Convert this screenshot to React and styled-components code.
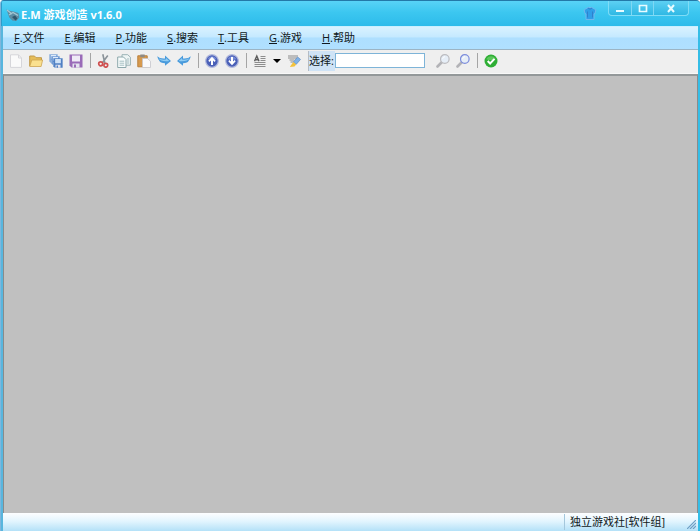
import React, { useState } from "react"
import styled, { createGlobalStyle } from "styled-components"

const GlobalStyle = createGlobalStyle`
    * {
        box-sizing: border-box;
    }

    body{
        margin: 0;
        font-family: "Open Sans", "Noto Sans CJK SC", sans-serif;
        font-size: 11px;
        color: #101820;
    }

    button{
        padding: 0;
        border: 0;
        background: none;
        font: inherit;
        color: inherit;
    }
`

const Window = styled.div`
    display: flex;
    flex-direction: column;
    min-height: 100vh;
    border-top: 1px solid #2379a8;
    border-left: 1px solid #7fb6dc;
    border-radius: 4px 4px 0 0;
    background: #35bde6;
    overflow: hidden;
`

const TitleBar = styled.header`
    display: flex;
    align-items: flex-start;
    height: 25px;
    padding: 0 11px 0 4px;
    background: linear-gradient(#58d3f7, #3cc7f0 45%, #2dbbea);
    border-left: 1px solid #2e9cc9;
`

const Title = styled.h1`
    display: flex;
    align-items: center;
    gap: 1px;
    flex: 1;
    height: 25px;
    margin: 0;
    padding-top: 2px;
    color: #fff;
    font-size: 11px;
    font-weight: 700;
    line-height: 16px;
    white-space: nowrap;
`

const SkinButton = styled.button`
    width: 14px;
    height: 16px;
    margin: 5px 11px 0 0;
`

const WindowButtons = styled.div`
    display: flex;
    height: 15px;
    border: 1px solid #7fdcf6;
    border-top: 0;
    border-radius: 0 0 4px 4px;
    background: linear-gradient(#5dd0f3, #2fb8e4);
`

const WindowButton = styled.button`
    display: flex;
    align-items: center;
    justify-content: center;
    width: ${({ $wide }) => ($wide ? "35px" : "22px")};

    & + & {
        border-left: 1px solid #7fd8f4;
    }
`

const Body = styled.div`
    display: flex;
    flex-direction: column;
    flex: 1;
    border-left: 2px solid #58b6de;
    border-right: 2px solid #35bde6;
`

const MenuBar = styled.nav`
    display: flex;
    align-items: center;
    gap: 20px;
    height: 24px;
    padding-left: 11px;
    border-top: 1px solid #c9efff;
    border-bottom: 1px solid #9cb4c4;
    background: linear-gradient(#d9f2ff, #c5e9ff 45%, #aedfff 50%, #b0e0ff);
`

const MenuItem = styled.button`
    line-height: 16px;
    white-space: nowrap;
`

const ToolBar = styled.div`
    display: flex;
    align-items: center;
    height: 24px;
    padding: 0 0 2px 3px;
    background: #efefef;
    border-bottom: 1px solid #f8f8f8;
`

const ToolButton = styled.button`
    display: flex;
    align-items: center;
    justify-content: center;
    width: ${({ $narrow }) => ($narrow ? "14px" : "20px")};
    height: 20px;
`

const Separator = styled.span`
    width: 1px;
    height: 15px;
    margin: 0 3px 0 4px;
    background: #a5a5a5;
`

const SelectLabel = styled.label`
    height: 20px;
    width: 27px;
    margin-left: 4px;
    border-left: 1px solid #b4bcc6;
    background: #cfe3f6;
    line-height: 20px;
    white-space: nowrap;
`

const SelectInput = styled.input`
    width: 90px;
    height: 15px;
    margin-right: 8px;
    padding: 0 2px;
    border: 1px solid #7eb4d8;
    background: #fff;
    font: inherit;
    outline: none;
`

const Workspace = styled.main`
    flex: 1;
    border: 1px solid #8b8b8b;
    border-top: 2px solid #939899;
    border-bottom: 0;
    background: #c0c0c0;
`

const StatusBar = styled.footer`
    display: flex;
    align-items: center;
    justify-content: flex-end;
    height: 18px;
    background: linear-gradient(#fdfeff, #e3f5fe 45%, #b4e1f8);
`

const StatusText = styled.span`
    width: 123px;
    padding-left: 5px;
    border-left: 1px solid #a4c7dc;
    line-height: 16px;
    white-space: nowrap;
`

const Grip = styled.svg`
    align-self: flex-end;
    margin: 0 2px 2px 0;
`

const menus = [
    ["F", "文件"],
    ["E", "编辑"],
    ["P", "功能"],
    ["S", "搜索"],
    ["T", "工具"],
    ["G", "游戏"],
    ["H", "帮助"],
];

const Disk = ({ color, light, x = 0, y = 0, size = 14 }) => (
    <svg x={x} y={y} width={size} height={size} viewBox="0 0 14 14">
        <path d="M.5.5h13v13H2.5l-2-2z" fill={color} />
        <path d="M3 1.5h8v6H3z" fill={light} />
        <path d="M3.5 9.5h7v4h-7z" fill="#e4e4ee" />
        <path d="M5 10.5h2v3H5z" fill={color} />
    </svg>
);

const Magnifier = ({ rim }) => (
    <>
        <path d="M6 8 1.5 12.5" stroke="#b3b3b7" strokeWidth="2.6" strokeLinecap="round" />
        <circle cx="8.8" cy="5" r="4.3" fill="#e6eef7" stroke={rim} strokeWidth="1.2" />
        <path d="M6.6 4.8q.5-1.9 2.4-2.1" fill="none" stroke="#fff" />
    </>
);

const CircleArrow = ({ flip }) => (
    <>
        <circle cx="7" cy="7" r="6.3" fill="#4a60b8" stroke="#b4bbdd" strokeWidth="1.2" />
        <path d="M2.5 5a5 5 0 0 1 9 0q-4 2-9 0" fill="#7488d4" />
        <path d="M7 2.8 3.3 6.7l1.2 1.2L6 6.6V11h2V6.6l1.5 1.3 1.2-1.2z" fill="#fff" transform={flip ? "rotate(180 7 7)" : undefined} />
    </>
);

const CurveArrow = () => (
    <>
        <path d="M.2 2.2Q3 5 8 4.4V1.6L14 7 8 11.8V9.2Q1.8 9.5.2 2.2z" fill="#4a9bdc" />
        <path d="M1.2 4Q4 6.3 9 5.6V4l3.3 3Q4 8 1.2 4z" fill="#8fccf3" />
    </>
);

const icons = {
    new: (
        <>
            <path d="M1.5.8h8l3 3.2v9.4h-11z" fill="#fafafa" stroke="#d6d6da" />
            <path d="M9.5.8V4h3" fill="none" stroke="#d6d6da" />
        </>
    ),
    open: (
        <>
            <path d="M.7 12V2h4.8L7 3.7h5.5V7" fill="#e6bd58" stroke="#c09a4c" />
            <path d="M.7 12.5 2.8 6h10.8l-1.5 6.5z" fill="#fae08e" stroke="#cda552" strokeWidth=".8" />
        </>
    ),
    saveAll: (
        <>
            <Disk color="#83aadb" light="#dfebfa" size={9} />
            <Disk color="#6f9ad4" light="#dfebfa" x={2} y={2} size={9} />
            <Disk color="#4f80c4" light="#cfe2f7" x={4} y={4} size={10} />
        </>
    ),
    save: <Disk color="#9a6bb8" light="#efeaf6" />,
    cut: (
        <>
            <path d="M5.8.3 7.8 9M10.8 1.5 5.2 9" stroke="#8a9298" strokeWidth="1.6" />
            <circle cx="3.7" cy="9.8" r="2" fill="none" stroke="#cf4f4f" strokeWidth="1.7" />
            <circle cx="8.8" cy="11.3" r="1.9" fill="none" stroke="#cf4f4f" strokeWidth="1.7" />
        </>
    ),
    copy: (
        <>
            <path d="M5 .7h5.7l2.7 2.5v8H5z" fill="#eef5f5" stroke="#9bb2b5" />
            <path d="M.7 3h5.8L9 5.5v8H.7z" fill="#f8fcfc" stroke="#8da8ac" />
            <path d="M2.5 7.2h4.7M2.5 9.2h4.7M2.5 11.2h4.7M10 5h2M10 7h2M10 9h2" stroke="#9bb7ba" strokeWidth=".9" />
        </>
    ),
    paste: (
        <>
            <path d="M.8 1.8h9.4v11H.8z" fill="#d79a4e" stroke="#b97f3c" />
            <path d="M3.3.5h4.4v2.7H3.3z" fill="#8e8a85" />
            <path d="M5.5 4.5h5l3 2.8v6.2h-8z" fill="#fafafc" stroke="#c5c5cc" strokeWidth=".8" />
        </>
    ),
    redo: <CurveArrow />,
    undo: <g transform="matrix(-1 0 0 1 14 0)"><CurveArrow /></g>,
    up: <CircleArrow />,
    down: <CircleArrow flip />,
    align: (
        <>
            <path d="M1.5 8.5h11M1.5 10.5h11M1.5 12.5h11M7.5 2.5h5M7.5 4.5h5M7.5 6.5h5" stroke="#8c8c8c" />
            <path d="M1.5 7.2 3.8 2 6 7.2M2 5.7h3.5" fill="none" stroke="#5c5c5c" strokeWidth="1.4" />
        </>
    ),
    edit: (
        <>
            <path d="M1 2h10M1 4h9M2.5 6h5M3.5 8h3" stroke="#8c8c8c" strokeWidth="1.2" />
            <path d="m10.7 3 2.8 2.4-4.3 5L6.3 8z" fill="#7fb2e8" stroke="#5584be" strokeWidth=".6" />
            <path d="m6.3 8 2.9 2.4L7.5 12.6 2.8 13z" fill="#f2c23d" />
        </>
    ),
    find: <Magnifier rim="#bcbcc0" />,
    findNext: <Magnifier rim="#7c8cdc" />,
    check: (
        <>
            <circle cx="7" cy="7" r="6.5" fill="#2eae35" />
            <path d="M2.3 5.2a5.2 5.2 0 0 1 9.4 0Q7 7 2.3 5.2" fill="#5cc75b" />
            <path d="m3.7 7 2.4 2.5 4.4-4.6" fill="none" stroke="#fff" strokeWidth="2" />
        </>
    ),
};

const tools = [
    ["new", "新建"],
    ["open", "打开"],
    ["saveAll", "全部保存"],
    ["save", "保存"],
    null,
    ["cut", "剪切"],
    ["copy", "复制"],
    ["paste", "粘贴"],
    ["redo", "重做"],
    ["undo", "撤销"],
    null,
    ["up", "上移"],
    ["down", "下移"],
    null,
    ["align", "对齐"],
];

const Tool = ({ name, label }) => (
    <ToolButton type="button" aria-label={label}>
        <svg width="14" height="14" viewBox="0 0 14 14">{icons[name]}</svg>
    </ToolButton>
);

const App = () => {

    const [keyword, setKeyword] = useState("");

    return(
        <>
            <GlobalStyle />
            <Window>
                <TitleBar>
                    <Title>
                        <svg width="14" height="14" viewBox="0 0 14 14">
                            <path d="m.5 1.5 4 1.5 3 .5 5 1.5.8 4.5-3 3.5-4-.5-3-3z" fill="#5c8ca2" />
                            <path d="m1 2 5 4M3 7l4-2.5 5 3" fill="none" stroke="#a3c6d3" strokeWidth="1.4" />
                            <path d="m6 9 3-1.5 2.5 3-2 2z" fill="#31566b" />
                        </svg>
                        E.M 游戏创造 v1.6.0
                    </Title>
                    <SkinButton type="button" aria-label="换肤">
                        <svg width="14" height="16" viewBox="0 0 14 16">
                            <path d="M5 1.5h4l3.8 2.3L12 7.5l-1 .3v5.7H3V7.8l-1-.3-.8-3.7z" fill="#2f9ee8" stroke="#74b8ee" strokeWidth=".9" />
                            <path d="M5 2q2 2.5 4 0M4.5 5.5v6M9.5 5.5v6" fill="none" stroke="#2f80cc" />
                        </svg>
                    </SkinButton>
                    <WindowButtons>
                        <WindowButton type="button" aria-label="最小化">
                            <svg width="10" height="10" viewBox="0 0 10 10">
                                <path d="M1 7h8v2H1z" fill="#e8fbff" />
                            </svg>
                        </WindowButton>
                        <WindowButton type="button" aria-label="最大化">
                            <svg width="10" height="10" viewBox="0 0 10 10">
                                <path d="M1.5 2.5h7v6h-7z" fill="none" stroke="#e8fbff" strokeWidth="1.7" />
                            </svg>
                        </WindowButton>
                        <WindowButton type="button" aria-label="关闭" $wide>
                            <svg width="10" height="10" viewBox="0 0 10 10">
                                <path d="m2 2 6 7M8 2 2 9" stroke="#e8fbff" strokeWidth="2" />
                            </svg>
                        </WindowButton>
                    </WindowButtons>
                </TitleBar>
                <Body>
                    <MenuBar>
                        {menus.map(([key, name]) => (
                            <MenuItem type="button" key={key}>
                                <u>{key}</u>.{name}
                            </MenuItem>
                        ))}
                    </MenuBar>
                    <ToolBar>
                        {tools.map((tool, i) => (
                            tool ? <Tool key={tool[0]} name={tool[0]} label={tool[1]} /> : <Separator key={i} />
                        ))}
                        <ToolButton type="button" aria-label="更多" $narrow>
                            <svg width="8" height="6" viewBox="0 0 8 6">
                                <path d="M0 1h8L4 5z" fill="#000" />
                            </svg>
                        </ToolButton>
                        <Tool name="edit" label="修改" />
                        <SelectLabel htmlFor="keyword">选择:</SelectLabel>
                        <SelectInput id="keyword" value={keyword} onChange={(e) => setKeyword(e.target.value)} />
                        <Tool name="find" label="查找" />
                        <Tool name="findNext" label="查找下一个" />
                        <Separator />
                        <Tool name="check" label="检查" />
                    </ToolBar>
                    <Workspace />
                    <StatusBar>
                        <StatusText>独立游戏社[软件组]</StatusText>
                        <Grip width="9" height="9" viewBox="0 0 9 9">
                            <path d="m0 9 9-9M3 9l6-6M6 9l3-3" stroke="#6d9ec4" strokeWidth="1.2" />
                        </Grip>
                    </StatusBar>
                </Body>
            </Window>
        </>
    )
}

export default App;
